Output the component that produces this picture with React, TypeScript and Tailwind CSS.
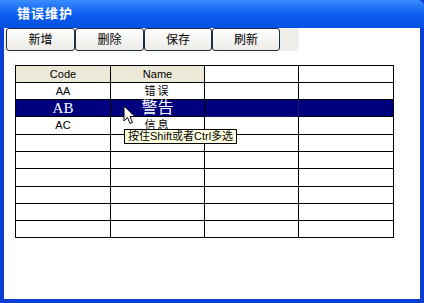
import React from "react";

const font = { fontFamily: '"Liberation Sans", "Noto Sans CJK SC", sans-serif' };

const rowHeights = ["h-[17px]", "h-[17px]", "h-[17px]", "h-[18px]", "h-[17px]", "h-[17px]", "h-[18px]", "h-[17px]", "h-[17px]", "h-[17px]"];

type Row = { code: string; name: string; selected?: boolean };

const rows: Row[] = [
  { code: "AA", name: "错误" },
  { code: "AB", name: "警告", selected: true },
  { code: "AC", name: "信息" },
  { code: "", name: "" },
  { code: "", name: "" },
  { code: "", name: "" },
  { code: "", name: "" },
  { code: "", name: "" },
  { code: "", name: "" },
];

function ToolButton({ label, w }: { label: string; w: string }) {
  return (
    <button
      className={`${w} h-[23px] flex items-center justify-center rounded-[3px] border border-[#1f2d47] bg-gradient-to-b from-white to-[#ecebe6] text-[12px] text-black`}
    >
      {label}
    </button>
  );
}

export default function App() {
  return (
    <div className="w-[424px] h-[303px] flex flex-col bg-[#0b3fd3] overflow-hidden" style={font}>
      <div className="h-[28px] shrink-0 flex items-center pl-[17px] rounded-tr-[6px] bg-gradient-to-b from-[#3a8cff] via-[#0a5df0] to-[#0650e0]">
        <span className="text-white font-bold text-[13px] tracking-[1px]">错误维护</span>
      </div>
      <div className="relative flex-1 mx-[4px] mb-[4px] bg-white flex flex-col">
        <div className="w-[295px] h-[23px] bg-[#efefec] flex pl-[2px]">
          <ToolButton label="新增" w="w-[69px]" />
          <ToolButton label="删除" w="w-[69px]" />
          <ToolButton label="保存" w="w-[68px]" />
          <ToolButton label="刷新" w="w-[68px]" />
        </div>
        <div className="mt-[14px] ml-[11px] w-[379px] border-l border-t border-black leading-none">
          <div className={`grid grid-cols-[95px_94px_94px_95px] ${rowHeights[0]}`}>
            <div className="border-r border-b border-black bg-[#ece9d8] flex items-center justify-center text-[11px] text-black">Code</div>
            <div className="border-r border-b border-black bg-[#ece9d8] flex items-center justify-center text-[11px] text-black">Name</div>
            <div className="border-r border-b border-black" />
            <div className="border-r border-b border-black" />
          </div>
          {rows.map((r, i) => (
            <div
              key={i}
              className={`grid grid-cols-[95px_94px_94px_95px] ${rowHeights[i + 1]} ${r.selected ? "bg-[#00007f] text-white" : "text-black"}`}
            >
              <div
                className={`border-r border-b border-black flex items-center justify-center leading-none ${r.selected ? "text-[15px]" : "text-[11px]"}`}
                style={r.selected ? { fontFamily: '"Liberation Serif", serif' } : undefined}
              >
                {r.code}
              </div>
              <div
                className={`border-r border-b border-black flex items-center justify-center leading-none ${r.selected ? "text-[16px]" : "text-[11px] tracking-[2px]"}`}
              >
                {r.name}
              </div>
              <div className={`border-r border-b ${r.selected ? "border-[#1a1a60]" : "border-black"}`} />
              <div className="border-r border-b border-black" />
            </div>
          ))}
        </div>

        <svg className="absolute left-[119px] top-[77px]" width="14" height="20" viewBox="0 0 14 20">
          <path d="M1 1 L1 16 L4.5 12.5 L7 18.5 L9.5 17.5 L7 11.5 L12 11.5 Z" fill="white" stroke="black" strokeWidth="1" strokeLinejoin="miter" />
        </svg>

        <div className="absolute left-[120px] top-[101px] h-[15px] px-[3px] flex items-center bg-[#ffffe1] border border-black text-[11px] text-black whitespace-nowrap">
          按住Shift或者Ctrl多选
        </div>
      </div>
    </div>
  );
}
